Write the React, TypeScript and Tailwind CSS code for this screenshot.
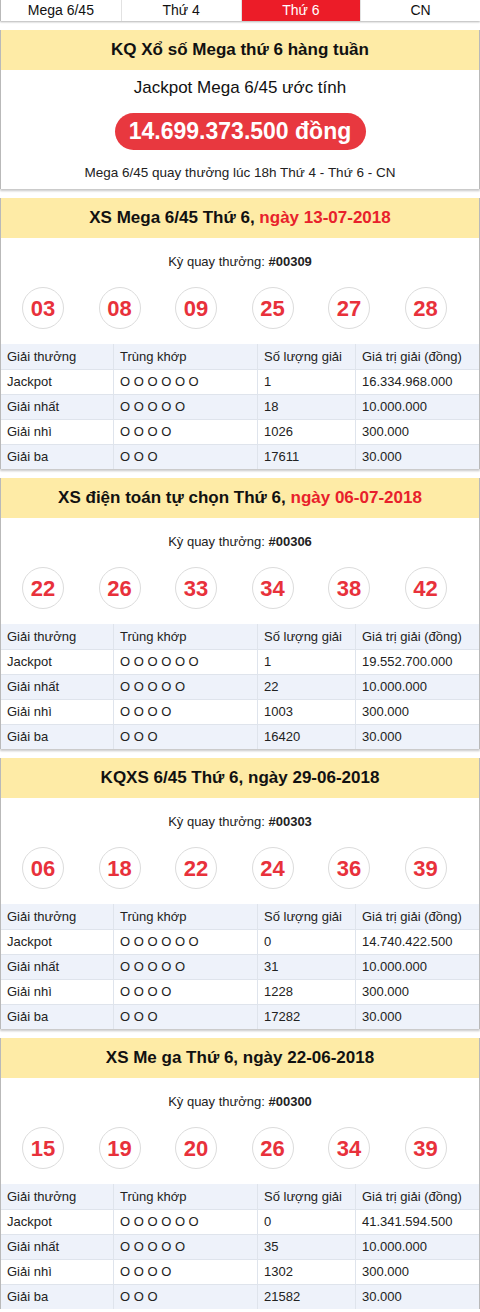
import React from "react";

interface Draw {
  title: React.ReactNode;
  ky: string;
  balls: string[];
  counts: string[];
  jackpot: string;
}

const tabs = ["Mega 6/45", "Thứ 4", "Thứ 6", "CN"];

const draws: Draw[] = [
  {
    title: (
      <>
        XS Mega 6/45 Thứ 6, <span className="text-[#e8212b]">ngày 13-07-2018</span>
      </>
    ),
    ky: "#00309",
    balls: ["03", "08", "09", "25", "27", "28"],
    counts: ["1", "18", "1026", "17611"],
    jackpot: "16.334.968.000",
  },
  {
    title: (
      <>
        XS điện toán tự chọn Thứ 6, <span className="text-[#e8212b]">ngày 06-07-2018</span>
      </>
    ),
    ky: "#00306",
    balls: ["22", "26", "33", "34", "38", "42"],
    counts: ["1", "22", "1003", "16420"],
    jackpot: "19.552.700.000",
  },
  {
    title: "KQXS 6/45 Thứ 6, ngày 29-06-2018",
    ky: "#00303",
    balls: ["06", "18", "22", "24", "36", "39"],
    counts: ["0", "31", "1228", "17282"],
    jackpot: "14.740.422.500",
  },
  {
    title: "XS Me ga Thứ 6, ngày 22-06-2018",
    ky: "#00300",
    balls: ["15", "19", "20", "26", "34", "39"],
    counts: ["0", "35", "1302", "21582"],
    jackpot: "41.341.594.500",
  },
];

const prizes = [
  { name: "Giải nhất", match: "O O O O O", value: "10.000.000" },
  { name: "Giải nhì", match: "O O O O", value: "300.000" },
  { name: "Giải ba", match: "O O O", value: "30.000" },
];

const Card = ({ children }: { children: React.ReactNode }) => (
  <section className="border-x border-[#b9b9b9] bg-white shadow-[0_2px_2px_rgba(0,0,0,0.22)]">
    {children}
  </section>
);

const Header = ({ children }: { children: React.ReactNode }) => (
  <h2 className="h-10 bg-[#feeba6] text-center text-[17px] font-bold leading-10 text-[#111]">
    {children}
  </h2>
);

const Row = ({ cells, blue }: { cells: string[]; blue: boolean }) => (
  <div
    className={`grid h-[25px] grid-cols-[112px_144px_98px_1fr] border-t border-[#dfe4ec] text-[13px] text-[#222] ${
      blue ? "bg-[#eef2fa]" : "bg-white"
    }`}
  >
    {cells.map((c, i) => (
      <div
        key={i}
        className={`flex items-center pl-[6px] ${i > 0 ? "border-l border-[#dfe4ec]" : ""}`}
      >
        {c}
      </div>
    ))}
  </div>
);

const DrawCard = ({ draw }: { draw: Draw }) => (
  <Card>
    <Header>{draw.title}</Header>
    <p className="mt-4 h-4 text-center text-[13px] leading-4 text-[#222]">
      Kỳ quay thưởng: <b>{draw.ky}</b>
    </p>
    <div className="mt-[17px] flex gap-[34.5px] pl-[21px]">
      {draw.balls.map((b, i) => (
        <div
          key={i}
          className="flex h-[42px] w-[42px] items-center justify-center rounded-full border-[1.5px] border-[#dcdcdc] text-[22px] font-bold text-[#e8313b]"
        >
          {b}
        </div>
      ))}
    </div>
    <div className="mt-[15px]">
      <div className="grid h-[25px] grid-cols-[112px_144px_98px_1fr] bg-[#eef2fa] text-[13px] text-[#222]">
        {["Giải thưởng", "Trùng khớp", "Số lượng giải", "Giá trị giải (đồng)"].map((c, i) => (
          <div
            key={i}
            className={`flex items-center pl-[6px] ${i > 0 ? "border-l border-[#dfe4ec]" : ""}`}
          >
            {c}
          </div>
        ))}
      </div>
      <Row cells={["Jackpot", "O O O O O O", draw.counts[0], draw.jackpot]} blue={false} />
      {prizes.map((p, i) => (
        <Row
          key={p.name}
          cells={[p.name, p.match, draw.counts[i + 1], p.value]}
          blue={i % 2 === 0}
        />
      ))}
    </div>
  </Card>
);

export default function App() {
  return (
    <div className="w-[480px] bg-white font-['Liberation_Sans',Arial,sans-serif] text-[#111]">
      <nav className="grid h-[21px] grid-cols-4 border-l border-[#b9b9b9] bg-white shadow-[0_1px_2px_rgba(0,0,0,0.3)]">
        {tabs.map((t, i) => (
          <div
            key={t}
            className={`flex items-center justify-center text-[14px] ${
              i === 2 ? "bg-[#ec1c28] text-white" : "text-[#111]"
            } ${i > 0 ? "border-l border-[#e2e2e2]" : ""}`}
          >
            {t}
          </div>
        ))}
      </nav>

      <div className="mt-[9px] flex flex-col gap-[9px]">
        <Card>
          <Header>KQ Xổ số Mega thứ 6 hàng tuần</Header>
          <p className="mt-[8px] text-center text-[17px] leading-5 text-[#111]">
            Jackpot Mega 6/45 ước tính
          </p>
          <div className="mt-[15px] flex justify-center">
            <div className="flex h-[37px] w-[251px] items-center justify-center rounded-full bg-[#e8383f] text-[23px] font-bold text-white">
              14.699.373.500 đồng
            </div>
          </div>
          <p className="mt-[15px] pb-[8px] text-center text-[13.5px] leading-4 text-[#222]">
            Mega 6/45 quay thưởng lúc 18h Thứ 4 - Thứ 6 - CN
          </p>
        </Card>

        {draws.map((d) => (
          <DrawCard key={d.ky} draw={d} />
        ))}
      </div>
    </div>
  );
}
